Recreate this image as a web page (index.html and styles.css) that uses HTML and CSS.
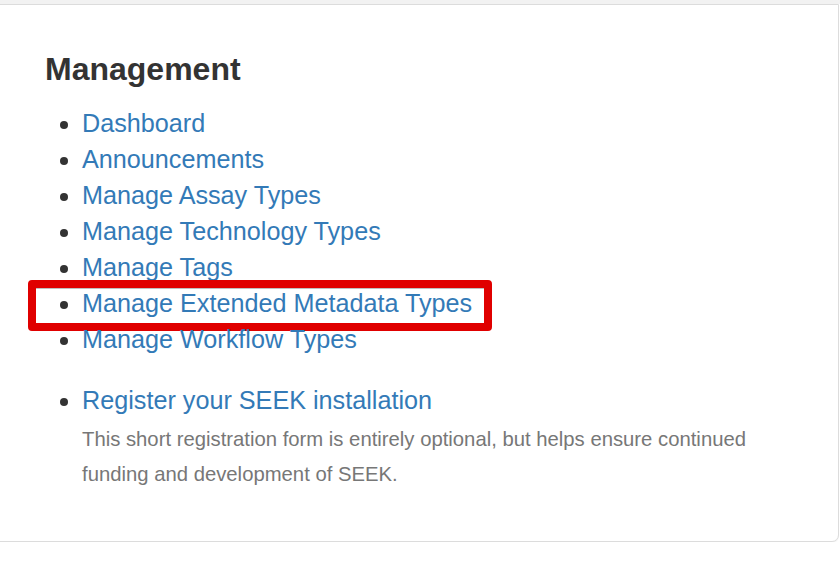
FILE: index.html
```html
<!DOCTYPE html>
<html>
<head>
<meta charset="utf-8">
<title>Management</title>
<link rel="stylesheet" href="styles.css">
</head>
<body>
<div class="strip"></div>
<div class="panel">
  <h3 class="title">Management</h3>
  <ul class="links">
    <li><a href="#">Dashboard</a></li>
    <li><a href="#">Announcements</a></li>
    <li><a href="#">Manage Assay Types</a></li>
    <li><a href="#">Manage Technology Types</a></li>
    <li><a href="#">Manage Tags</a></li>
    <li class="marked"><a href="#">Manage Extended Metadata Types</a><span class="highlight"></span></li>
    <li><a href="#">Manage Workflow Types</a></li>
  </ul>
  <ul class="links register">
    <li><a href="#">Register your SEEK installation</a>
      <p class="hint">This short registration form is entirely optional, but helps ensure continued funding and development of SEEK.</p>
    </li>
  </ul>
</div>
</body>
</html>
```

FILE: styles.css
```css
html, body {
  margin: 0;
  padding: 0;
  background: #ffffff;
}

body {
  font-family: "Liberation Sans", Arial, Helvetica, sans-serif;
  color: #333333;
}

.strip {
  height: 4px;
  background: #f2f2f2;
}

.panel {
  margin-left: -10px;
  width: 849px;
  box-sizing: border-box;
  border: 1px solid #dcdcdc;
  border-radius: 0 0 7px 7px;
  box-shadow: 0 1px 1px rgba(0, 0, 0, 0.05);
  padding: 47px 20px 49px 54px;
  background: #ffffff;
}

.title {
  margin: 0;
  font-size: 32px;
  font-weight: bold;
  line-height: 35px;
  color: #333333;
}

.links {
  margin: 18px 0 0 0;
  padding: 0 0 0 37px;
  list-style: disc;
  font-size: 25.2px;
  line-height: 36px;
}

.links li {
  position: relative;
}

.links a {
  color: #337ab7;
  text-decoration: none;
}

.register {
  margin-top: 25px;
}

.hint {
  margin: 4px 0 0 0;
  font-size: 20.3px;
  line-height: 35px;
  color: #777777;
  max-width: 700px;
}

.highlight {
  position: absolute;
  left: -54px;
  top: -5px;
  width: 464px;
  height: 51px;
  box-sizing: border-box;
  border: 8px solid #e00000;
  border-radius: 4px;
  box-shadow: inset 0 1px 0 rgba(0, 0, 0, 0.25);
  pointer-events: none;
}
```
